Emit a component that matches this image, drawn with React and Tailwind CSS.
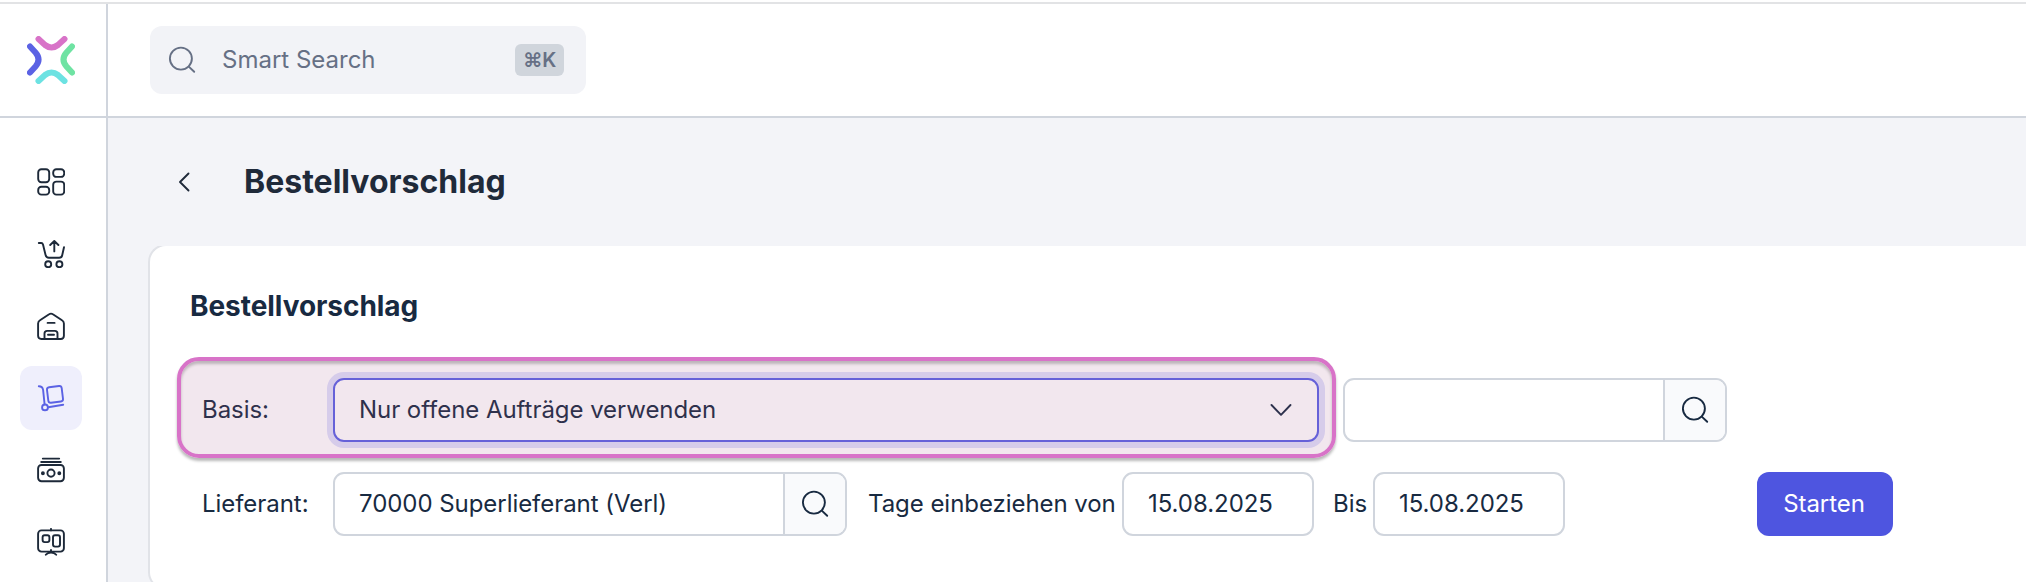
import clsx from 'clsx';

function Icon({ size = 28, className, children }) {
  return (
    <svg
      width={size}
      height={size}
      viewBox={`0 0 ${size} ${size}`}
      fill="none"
      stroke="currentColor"
      strokeWidth="1.9"
      strokeLinecap="round"
      strokeLinejoin="round"
      className={clsx('shrink-0', className)}
      aria-hidden="true"
    >
      {children}
    </svg>
  );
}

function SearchIcon({ className }) {
  return (
    <Icon className={className}>
      <circle cx="12.9" cy="12.6" r="11" />
      <path d="M20.8 20.6l5.4 5.2" />
    </Icon>
  );
}

const NAV_ITEMS = [
  {
    label: 'Dashboard',
    icon: (
      <>
        <rect x="1.2" y="1.3" width="11" height="13" rx="3.2" />
        <rect x="16.2" y="1.3" width="11" height="7.6" rx="3.2" />
        <rect x="1.2" y="18.8" width="11" height="7.8" rx="3.2" />
        <rect x="16.2" y="13.6" width="11" height="13" rx="3.2" />
      </>
    ),
  },
  {
    label: 'Verkauf',
    icon: (
      <>
        <path d="M1.8 3h2.4c1 0 1.5.5 1.8 1.5l2.5 10.2c.5 2 1.4 3 3.3 3h10.4c1.6 0 2.7-.9 3-2.5L27 7.2" />
        <path d="M17.3 11.4V1.2M13.2 5l4.1-4 4.1 4" />
        <circle cx="11.2" cy="24.2" r="3" />
        <circle cx="22.4" cy="24.2" r="3" />
      </>
    ),
  },
  {
    label: 'Lager',
    icon: (
      <>
        <path d="M1.1 11.6c0-1.5.6-2.5 1.9-3.3l9.100-6c1.300-.9 2.500-.9 3.800 0l9.100 6c1.300.8 1.900 1.800 1.900 3.300v12.200c0 2.100-1.100 3.200-3.200 3.200H4.300c-2.100 0-3.200-1.100-3.200-3.200z" />
        <path d="M10.6 10.9h7M7.5 26.8v-5.200c0-1.800.9-2.700 2.700-2.700h7.600c1.800 0 2.700.9 2.700 2.700v5.200M11 22.700h6" />
      </>
    ),
  },
  {
    label: 'Einkauf',
    active: true,
    icon: (
      <>
        <path d="M1.8 2.3c2.5 0 3.8.7 4.3 3.5l1.5 14.5" />
        <circle cx="8" cy="23.4" r="2.9" />
        <path d="M11.2 23.2l15-2.500" />
        <rect x="10.6" y="2.6" width="14.8" height="15.6" rx="2.4" transform="rotate(-7 18 10.4)" />
      </>
    ),
  },
  {
    label: 'Finanzen',
    icon: (
      <>
        <path d="M5.8 2.6h16.4M4.2 6h19.6" />
        <rect x="1.1" y="9" width="25.8" height="16.2" rx="3.4" />
        <circle cx="14" cy="17.1" r="3.6" />
        <circle cx="5.9" cy="17.3" r="1" fill="currentColor" />
        <circle cx="22.3" cy="17.3" r="1" fill="currentColor" />
      </>
    ),
  },
  {
    label: 'Berichte',
    icon: (
      <>
        <path d="M14 .9v1.500M14 24v-2M8.800 26.800C10 25.200 12 24.500 14 24.500s4 .7 5.200 2.300" />
        <rect x="1.1" y="2.4" width="25.8" height="21.2" rx="3.4" />
        <rect x="5.6" y="7.3" width="6.8" height="6.8" rx="2" />
        <rect x="16" y="7.3" width="7" height="11.3" rx="2" />
      </>
    ),
  },
];

function Logo() {
  return (
    <svg width="48" height="48" viewBox="0 0 48 48" fill="none" strokeWidth="6" strokeLinecap="round" aria-hidden="true">
      <path d="M11.5 3l6.5 6q6.500 5 13 0l6.500-6" stroke="#d873c8" />
      <path d="M3 10.5l5.500 6q6 7 0 14l-5.500 6" stroke="#5b62e4" />
      <path d="M45 10.5l-5.500 6q-6 7 0 14l5.500 6" stroke="#6fe3a3" />
      <path d="M11.5 45l6.500-6q6.500-5 13 0l6.500 6" stroke="#6ce2e2" />
    </svg>
  );
}

function Sidebar() {
  return (
    <aside className="flex w-[108px] shrink-0 flex-col border-r-2 border-[#d0d5dd] bg-white">
      <div className="flex h-[114px] shrink-0 border-b-2 border-[#d0d5dd] pt-8 pl-[27px]">
        <Logo />
      </div>
      <nav className="flex flex-col gap-2 pt-8 pl-5">
        {NAV_ITEMS.map((item) => (
          <button
            key={item.label}
            type="button"
            aria-label={item.label}
            className={clsx(
              'flex h-16 w-[62px] items-center justify-center rounded-xl',
              item.active ? 'bg-[#efeffc] text-[#5b62e4]' : 'text-[#1d2939]'
            )}
          >
            <Icon>{item.icon}</Icon>
          </button>
        ))}
      </nav>
    </aside>
  );
}

function TopBar() {
  return (
    <header className="flex h-[114px] shrink-0 border-b-2 border-[#d0d5dd] bg-white pt-[22px] pl-[42px]">
      <div className="flex h-[68px] w-[436px] items-center rounded-xl bg-[#f2f3f7] pr-[22px] pl-[18px] text-[#667085]">
        <SearchIcon />
        <span className="ml-[26px] flex-1 text-2xl">Smart Search</span>
        <kbd className="flex h-8 w-[49px] items-center justify-center rounded-md bg-[#d0d5dc] font-[Inter] text-xl font-semibold tracking-[-0.3px]">
          ⌘K
        </kbd>
      </div>
    </header>
  );
}

function TextField({ value, className }) {
  return (
    <div className={clsx('flex h-16 shrink-0 items-center rounded-[11px] border-2 border-[#d0d5dd] bg-white pl-6', className)}>
      {value}
    </div>
  );
}

function LookupField({ value, className }) {
  return (
    <div className={clsx('flex h-16 shrink-0 overflow-hidden rounded-[11px] border-2 border-[#d0d5dd] bg-white', className)}>
      <div className="flex flex-1 items-center pl-6">{value}</div>
      <button
        type="button"
        aria-label="Suchen"
        className="flex w-[62px] items-center justify-center border-l-2 border-[#d0d5dd] bg-[#f9fafc]"
      >
        <SearchIcon />
      </button>
    </div>
  );
}

function OrderProposalForm() {
  return (
    <div className="-mt-0.5 h-[346px] rounded-l-[18px] border-2 border-r-0 border-[#e1e3e8] bg-white text-2xl tracking-[-0.05px] text-[#182a41]">
      <h2 className="mt-[42px] ml-10 text-[28px] leading-9 font-bold">Bestellvorschlag</h2>

      <div className="relative mt-[54px] flex items-center pl-[52px]">
        <span className="w-[131px]">Basis:</span>
        <div className="flex h-16 w-[986px] items-center justify-between rounded-[11px] border-2 border-[#5b62e6] bg-white pr-[18px] pl-6 ring-6 ring-[#dfe0fb]">
          Nur offene Aufträge verwenden
          <Icon className="mr-1">
            <path d="M4.5 9l9.500 9.800L23.500 9" />
          </Icon>
        </div>
        <LookupField className="ml-6 w-96" />
        {/* marks the row that the user has to look at */}
        <div className="pointer-events-none absolute -top-[21px] left-[27px] h-[101px] w-[1159px] rounded-[22px] border-4 border-[#d873c8] bg-[#a85f8e]/15 shadow-[0_3px_3px_rgba(0,0,0,0.28),inset_0_3px_3px_rgba(0,0,0,0.22)]" />
      </div>

      <div className="mt-[30px] flex items-center pl-[52px]">
        <span className="w-[131px]">Lieferant:</span>
        <LookupField value="70000 Superlieferant (Verl)" className="w-[514px]" />
        <span className="ml-[21px] w-[254px] whitespace-nowrap">Tage einbeziehen von</span>
        <TextField value="15.08.2025" className="w-48" />
        <span className="ml-[19px] w-10">Bis</span>
        <TextField value="15.08.2025" className="w-48" />
        <button type="button" className="ml-48 h-16 w-[136px] rounded-xl bg-[#4e55e0] pr-0.5 text-white">
          Starten
        </button>
      </div>
    </div>
  );
}

export default function App() {
  return (
    <div className="h-[582px] w-[2026px] overflow-hidden bg-white pt-0.5 font-[Inter,sans-serif]">
      <div className="flex h-full flex-col border-t-2 border-[#e2e3e5]">
        <div className="flex min-h-0 flex-1">
          <Sidebar />
          <div className="flex min-w-0 flex-1 flex-col bg-[#f3f4f8]">
            <TopBar />
            <div className="flex h-32 shrink-0 items-center pl-[62px] text-[#1f2a3a]">
              <Icon>
                <path d="M18.5 5.500L10 14l8.500 8.500" />
              </Icon>
              <h1 className="ml-[46px] text-[32px] font-bold">Bestellvorschlag</h1>
            </div>
            <main className="min-h-0 flex-1 overflow-hidden pl-10">
              <OrderProposalForm />
            </main>
          </div>
        </div>
      </div>
    </div>
  );
}
